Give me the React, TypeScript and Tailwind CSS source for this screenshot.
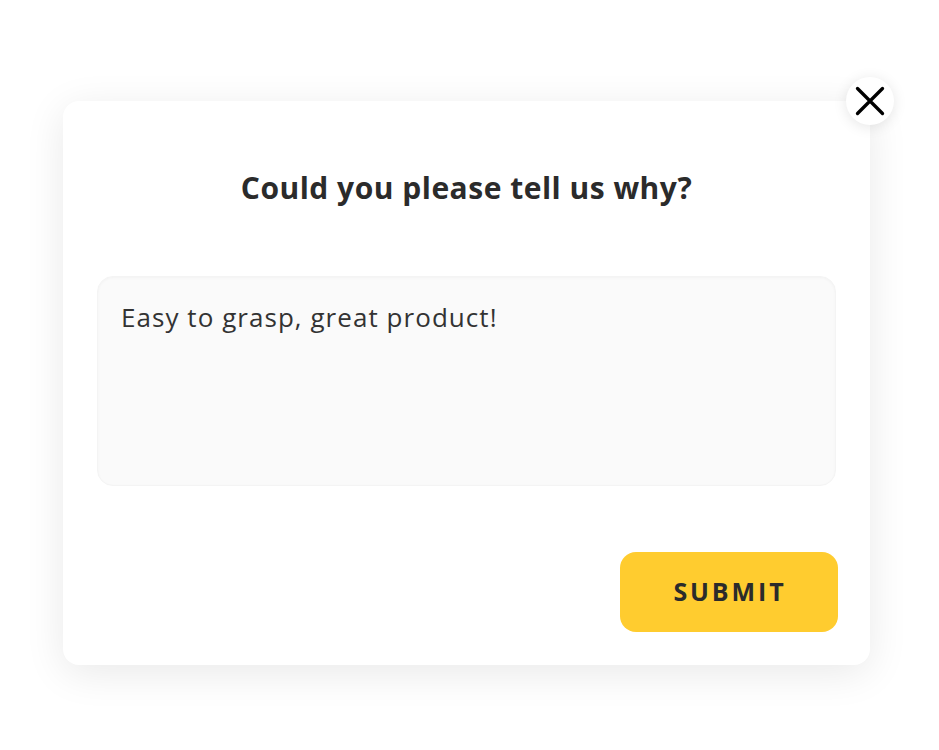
import React from "react";

export default function App() {
  return (
    <div className="w-[939px] h-[750px] bg-white pt-[101px] pl-[63px]" style={{ fontFamily: '"Open Sans", sans-serif' }}>
      <div className="relative w-[807px] h-[564px] bg-white rounded-[16px] shadow-[0_8px_40px_rgba(0,0,0,0.09)] px-[34px] pt-[66px] flex flex-col">
        <button className="absolute -top-[24px] -right-[24px] w-[48px] h-[48px] rounded-full bg-white shadow-[0_2px_14px_rgba(0,0,0,0.1)] flex items-center justify-center">
          <svg width="30" height="30" viewBox="0 0 30 30">
            <path d="M2.5 2.5 L27.5 27.5 M27.5 2.5 L2.5 27.5" stroke="#000" strokeWidth="3.3" strokeLinecap="round" />
          </svg>
        </button>
        <h2 className="text-center text-[30px] leading-[42px] font-bold tracking-[0.5px] text-[#2b2b2b]">Could you please tell us why?</h2>
        <div className="mt-[67px] h-[210px] rounded-[16px] bg-[#fafafa] border border-[#f4f4f4] shadow-[inset_0_1px_3px_rgba(0,0,0,0.03)] px-[23px] pt-[20px] text-[26px] leading-[40px] tracking-[1.05px] text-[#333]">
          Easy to grasp, great product!
        </div>
        <div className="flex justify-end mt-[66px] -mr-[2px]">
          <button className="w-[218px] h-[80px] rounded-[16px] bg-[#ffcc2f] text-[25px] font-bold tracking-[2.9px] text-[#2b2b2b] pl-[2px]">
            SUBMIT
          </button>
        </div>
      </div>
    </div>
  );
}
